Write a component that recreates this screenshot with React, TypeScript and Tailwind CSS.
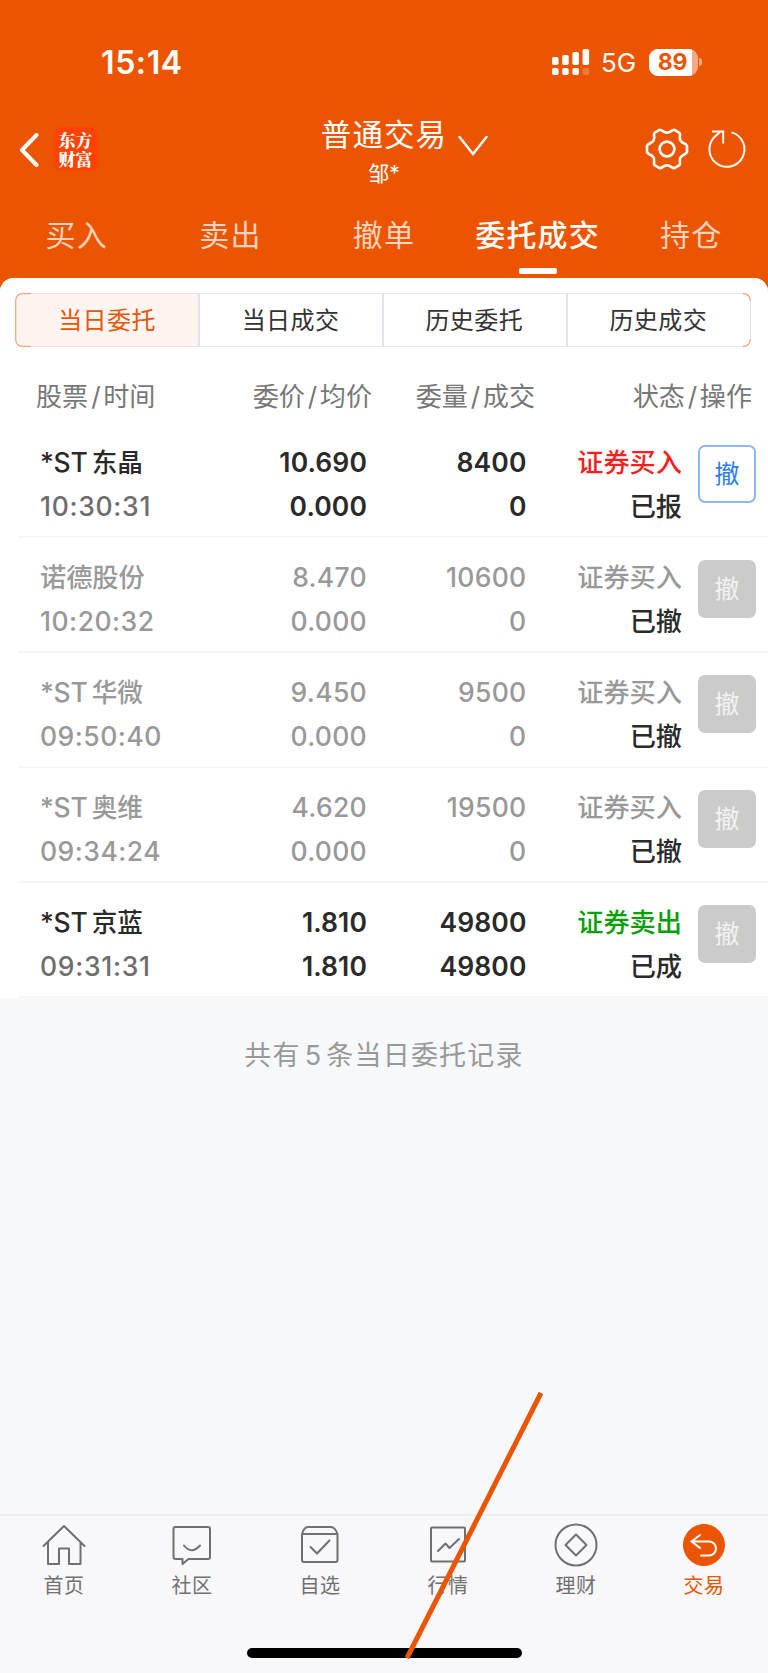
import React from 'react';

interface Order {
  name: string;
  time: string;
  price: string;
  avgPrice: string;
  amount: string;
  filled: string;
  side: string;
  status: string;
  tone: 'buy' | 'sell' | 'canceled';
  cancelable: boolean;
}

const orders: Order[] = [
  { name: '*ST东晶', time: '10:30:31', price: '10.690', avgPrice: '0.000', amount: '8400', filled: '0', side: '证券买入', status: '已报', tone: 'buy', cancelable: true },
  { name: '诺德股份', time: '10:20:32', price: '8.470', avgPrice: '0.000', amount: '10600', filled: '0', side: '证券买入', status: '已撤', tone: 'canceled', cancelable: false },
  { name: '*ST华微', time: '09:50:40', price: '9.450', avgPrice: '0.000', amount: '9500', filled: '0', side: '证券买入', status: '已撤', tone: 'canceled', cancelable: false },
  { name: '*ST奥维', time: '09:34:24', price: '4.620', avgPrice: '0.000', amount: '19500', filled: '0', side: '证券买入', status: '已撤', tone: 'canceled', cancelable: false },
  { name: '*ST京蓝', time: '09:31:31', price: '1.810', avgPrice: '1.810', amount: '49800', filled: '49800', side: '证券卖出', status: '已成', tone: 'sell', cancelable: false },
];

const tabs = ['买入', '卖出', '撤单', '委托成交', '持仓'];
const segments = ['当日委托', '当日成交', '历史委托', '历史成交'];

const sideColors = {
  buy: 'text-[#fa1e1e]',
  sell: 'text-[#07a007]',
  canceled: 'text-[#999]',
};

const StatusBar = () => (
  <div className="flex h-[124px] items-center pl-[101px] pr-[66px] text-white">
    <span className="mt-[2px] text-[32px] font-semibold leading-none tracking-[0.6px]">15:14</span>
    <div className="ml-auto flex items-center">
      <svg width="38" height="28" viewBox="0 0 38 28" fill="currentColor">
        <rect x="0" y="9" width="6.500" height="8" rx="1.800" />
        <rect x="10.200" y="7" width="6.500" height="10" rx="1.800" />
        <rect x="20.400" y="4" width="6.500" height="13" rx="1.800" />
        <rect x="30.600" y="1" width="6.500" height="16" rx="1.800" />
        <rect x="0" y="20" width="6.500" height="7" rx="1.800" />
        <rect x="10.200" y="20" width="6.500" height="7" rx="1.800" />
        <rect x="20.400" y="20" width="6.500" height="7" rx="1.800" />
        <rect x="30.600" y="20" width="6.500" height="7" rx="1.800" opacity="0.22" />
      </svg>
      <span className="ml-[11px] mt-0.5 w-[36px] text-[26px] leading-none">5G</span>
      <div className="ml-[12px] flex h-[27px] w-[49px] items-center overflow-hidden rounded-[9px] bg-[#f8a982]">
        <div className="flex h-full w-[43px] items-center justify-center bg-white pl-1 text-[23px] font-bold leading-none tracking-[-0.3px] text-[#eb5502]">
          89
        </div>
      </div>
      <div className="ml-[1px] h-[8px] w-[3px] rounded-r-full bg-[#f8a982]" />
    </div>
  </div>
);

const Header = () => (
  <div className="grid h-[78px] grid-cols-[1fr_auto_1fr] text-white">
    <div className="flex h-[50px] items-center pl-[18px]">
      <svg width="22" height="36" viewBox="0 0 22 36" fill="none" stroke="currentColor" strokeWidth="4" strokeLinecap="round" strokeLinejoin="round">
        <path d="M18.500 4 4 19 18.500 34" />
      </svg>
      <div className="ml-[14px] flex h-[44px] w-[44px] items-center justify-center rounded-[8px] bg-[#fe4201] font-['Noto_Serif_CJK_SC','Noto_Sans_CJK_SC',serif] text-[17px] font-black leading-[19px]">
        <span className="w-[35px] break-all">东方财富</span>
      </div>
    </div>
    <div className="flex flex-col items-center">
      <span className="-mt-[8px] h-[37px] text-[30.5px] leading-[37px] tracking-[1.1px]">普通交易</span>
      <span className="mt-[3px] text-[21px] leading-[36px]">邹*</span>
    </div>
    <div className="flex h-[50px] items-center">
      <svg className="ml-[10px] mt-[-8px]" width="32" height="22" viewBox="0 0 32 22" fill="none" stroke="currentColor" strokeWidth="2.4" strokeLinecap="round">
        <path d="M2.500 3 16 20 29.500 3" />
      </svg>
      <svg className="ml-auto" width="44" height="44" viewBox="0 0 44 44" fill="none" stroke="currentColor" strokeWidth="2.6" strokeLinejoin="round">
        <path d="M14.6 2.8 C17.8 2.8 18 5.6 22 5.6 S26.200 2.800 29.400 2.800 L34.500 5.800 C36.200 8.600 33.600 9.800 35.400 13.400 S40.200 15.600 42 18.800 V25.200 C40.200 28.400 37.400 27 35.400 30.600 S36.200 35.400 34.500 38.200 L29.400 41.200 C26.200 41.200 26 38.400 22 38.400 S17.800 41.200 14.600 41.200 L9.500 38.200 C7.800 35.400 10.400 34.200 8.600 30.600 S3.800 28.400 2 25.200 V18.800 C3.800 15.600 6.600 17 8.600 13.400 S7.800 8.600 9.500 5.800 Z" />
        <circle cx="22" cy="22" r="7.4" />
      </svg>
      <svg className="ml-[18px] mr-[21px]" width="40" height="40" viewBox="0 0 40 40" fill="none" stroke="currentColor" strokeWidth="2">
        <path d="M24.500 3.400 A17.500 17.500 0 1 1 8.800 6.800" />
        <path d="M5 2.600 H16.200 V14.600" />
        <path d="M8.300 7.200 13.500 2.600" />
      </svg>
    </div>
  </div>
);

const TabBar = () => (
  <div className="grid h-[76px] grid-cols-5 text-[30px] tracking-[1.2px] text-[#ffd3bd]">
    {tabs.map((tab) => (
      <div key={tab} className="flex flex-col items-center whitespace-nowrap">
        <span className={tab === '委托成交' ? 'mt-3 leading-[42px] font-medium text-white' : 'mt-3 leading-[42px]'}>{tab}</span>
        {tab === '委托成交' && <span className="mt-[12px] h-[6px] w-[38px] rounded-[2px] bg-white" />}
      </div>
    ))}
  </div>
);

const Segments = () => (
  <div className="relative ml-[15px] mt-[15px] h-[54px] w-[736px]">
    <div className="grid h-full grid-cols-[182px_184px_183.5px_1fr] overflow-hidden rounded-[8px] border-[1.5px] border-[#e3e3ea] text-[24px] tracking-[0.4px] text-[#333]">
      {segments.map((label, i) => (
        <div
          key={label}
          className={
            i === 0
              ? 'flex items-center justify-center bg-[#fff4f0] pt-[2px] text-[#ea5504]'
              : 'flex items-center justify-center border-l-2 border-[#e3e3ea] pr-[1px] pt-[2px]'
          }
        >
          {label}
        </div>
      ))}
    </div>
    {/* orange tips on the rounded corners */}
    <svg className="pointer-events-none absolute left-0 top-0" width="736" height="54" viewBox="0 0 736 54" fill="none" stroke="#f2a47e" strokeWidth="1.2">
      <path d="M16 0.700 H8 Q0.700 0.700 0.700 8 V46 Q0.700 53.300 8 53.300 H16" />
      <path d="M728 0.700 Q735.300 0.700 735.300 8" />
      <path d="M728 53.300 Q735.300 53.300 735.300 46" />
    </svg>
  </div>
);

const Slash = () => <span className="mx-[3px] inline-block w-[9px] text-center">/</span>;

const ColumnHeads = () => (
  <div className="flex h-[76px] items-center pl-[36px] pt-[24px] text-[26.1px] leading-[50px] text-[#777]">
    <span className="w-[160px]">股票<Slash />时间</span>
    <span className="w-[176px] text-right">委价<Slash />均价</span>
    <span className="w-[163px] text-right">委量<Slash />成交</span>
    <span className="w-[217px] text-right">状态<Slash />操作</span>
  </div>
);

const OrderRow = ({ order }: { order: Order }) => {
  const muted = order.tone === 'canceled';
  const main = muted ? 'text-[#999]' : 'text-[#2a2a2a]';
  const figures = muted ? 'tracking-[0.3px] text-[#999]' : 'font-semibold tracking-[0.1px] text-[#2a2a2a]';
  const hasPrefix = order.name.startsWith('*ST');
  return (
    <div className="ml-[18px] flex h-[115px] border-b-2 border-[#f6f6f8] pl-[22px] pt-[17px] text-[26.5px] font-medium leading-[44px]">
      <div className={`w-[140px] ${main}`}>
        <div className="h-[44px]">
          {hasPrefix && <span className="mr-[4px] tracking-[-0.2px]">*ST</span>}
          <span className={hasPrefix ? 'text-[25.6px]' : 'text-[26.2px]'}>{hasPrefix ? order.name.slice(3) : order.name}</span>
        </div>
        <div className={muted ? 'tracking-[0.5px] text-[#999]' : 'tracking-[0.7px] text-[#6e6e6e]'}>{order.time}</div>
      </div>
      <div className={`w-[187px] text-right ${figures}`}>
        <div>{order.price}</div>
        <div>{order.avgPrice}</div>
      </div>
      <div className={`w-[159.5px] text-right ${figures}`}>
        <div>{order.amount}</div>
        <div>{order.filled}</div>
      </div>
      <div className="w-[155.5px] pt-[0.5px] text-right text-[26.2px]">
        <div className={sideColors[order.tone]}>{order.side}</div>
        <div className="text-[#2a2a2a]">{order.status}</div>
      </div>
      <button
        className={
          order.cancelable
            ? 'ml-[16px] mt-[5px] h-[58px] w-[58px] rounded-[7px] border-2 border-[#8ab8f6] text-[25px] font-normal leading-none text-[#2f7de8]'
            : 'ml-[16px] mt-[5px] h-[58px] w-[58px] rounded-[7px] bg-[#cbcbcb] text-[25px] font-normal leading-none text-[#f2f2f2]'
        }
      >
        撤
      </button>
    </div>
  );
};

const NavIcon = ({ children }: { children: React.ReactNode }) => (
  <svg width="44" height="44" viewBox="0 0 44 44" fill="none" stroke="currentColor" strokeWidth="2" strokeLinecap="round" strokeLinejoin="round">
    {children}
  </svg>
);

const navItems = [
  {
    label: '首页',
    icon: <path d="M1.500 23 22 3 42.500 23 M6 19 V41 H17 V25.500 H27 V41 H38.500 V19" />,
  },
  {
    label: '社区',
    icon: (
      <>
        <path d="M5.500 4 H38 Q40 4 40 6 V34 Q40 36 38 36 H18.500 L12.500 41 V36 H5.500 Q3.500 36 3.500 34 V6 Q3.500 4 5.500 4 Z" />
        <path d="M14 22.500 Q21.500 32 30 22.500" />
      </>
    ),
  },
  {
    label: '自选',
    icon: (
      <>
        <path d="M4 11 Q6 4 10 4 H33 Q37 4 39.500 11 V37 Q39.500 39 37.500 39 H6 Q4 39 4 37 Z M4 11 H39.500" />
        <path d="M12.500 24 19 30.500 31.500 17.500" />
      </>
    ),
  },
  {
    label: '行情',
    icon: (
      <>
        <rect x="5" y="4.500" width="34" height="34" rx="1" />
        <path d="M12 28 19.500 20.500 23.500 25 33 16" />
      </>
    ),
  },
  {
    label: '理财',
    icon: (
      <>
        <circle cx="22" cy="22" r="20.500" />
        <path d="M22 11.500 32.500 22 22 32.500 11.500 22 Z" />
      </>
    ),
  },
  {
    label: '交易',
    icon: (
      <>
        <circle cx="22" cy="22" r="20.500" fill="#eb5502" stroke="#eb5502" strokeWidth="1" />
        <path d="M18 12 9.500 18.500 18 25 M9.500 18.500 H27 A6.500 6.500 0 0 1 27 32.500 H19" stroke="#fff" />
      </>
    ),
  },
];

const BottomNav = () => (
  <div className="h-[159px] border-t-2 border-[#ececf3] bg-[#f8f8fb]">
    <div className="grid h-[132px] grid-cols-6 pt-[7px]">
      {navItems.map((item, i) => (
        <div
          key={item.label}
          className={i === 5 ? 'flex flex-col items-center text-[#eb5502]' : 'flex flex-col items-center text-[#707070]'}
        >
          <NavIcon>{item.icon}</NavIcon>
          <span className="mt-[4px] text-[20px] leading-[30px] tracking-[0.5px]">{item.label}</span>
        </div>
      ))}
    </div>
    <div className="mx-auto h-[10px] w-[275px] rounded-full bg-black" />
  </div>
);

export default function App() {
  return (
    <div className="relative flex h-[1673px] w-[768px] flex-col overflow-hidden bg-[#eb5502] font-['Inter','Noto_Sans_CJK_SC',sans-serif]">
      <StatusBar />
      <Header />
      <TabBar />
      <div className="flex flex-1 flex-col overflow-hidden rounded-t-[14px] bg-[#f7f8fa]">
        <div className="bg-white">
          <Segments />
          <ColumnHeads />
          {orders.map((order) => (
            <OrderRow key={order.time} order={order} />
          ))}
        </div>
        <p className="mt-[38px] text-center text-[27px] leading-[40px] tracking-[1.2px] text-[#999]">
          共有<span className="mx-[4px]">5</span>条当日委托记录
        </p>
      </div>
      <BottomNav />

      {/* diagonal marker drawn over the page */}
      <svg className="pointer-events-none absolute left-[400px] top-[1385px]" width="150" height="280" viewBox="0 0 150 280">
        <path d="M141 8 7 273" stroke="#eb5502" strokeWidth="5" />
      </svg>
    </div>
  );
}
